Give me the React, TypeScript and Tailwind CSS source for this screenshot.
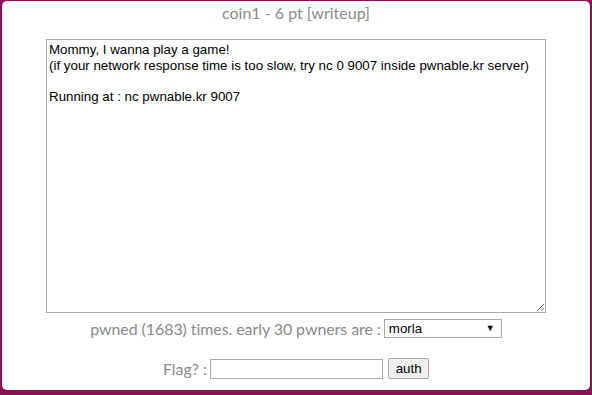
import React from "react";

export default function App() {
  return (
    <div className="w-[592px] h-[395px] bg-[#8b1054] pt-px pl-[2px] pr-[2px] pb-[5px] overflow-hidden">
      <div className="w-full h-full bg-white rounded-[5px] flex flex-col items-center" style={{ fontFamily: "Lato, sans-serif" }}>
        <div className="text-[16px] leading-[20px] text-[#8a8a8a] mt-[2px]">coin1 - 6 pt [writeup]</div>
        <textarea
          readOnly
          className="mt-[16px] w-[500px] h-[274px] border border-[#a9a9a9] px-[2px] pt-[2px] text-[13.33px] leading-[15.6px] text-black outline-none"
          style={{ fontFamily: '"Liberation Sans", Arial, sans-serif', resize: "both" }}
          defaultValue={"Mommy, I wanna play a game!\n(if your network response time is too slow, try nc 0 9007 inside pwnable.kr server)\n\nRunning at : nc pwnable.kr 9007"}
        />
        <div className="mt-[6px] flex items-center h-[19px] text-[16px] text-[#8a8a8a] tracking-[-0.08px]">
          <span>pwned (1683) times. early 30 pwners are :</span>
          <div
            className="ml-[3px] w-[118px] h-[19px] border border-[#a9a9a9] flex items-center justify-between pl-[4px] pr-[6px] text-[13.33px] text-black tracking-normal"
            style={{ fontFamily: '"Liberation Sans", Arial, sans-serif' }}
          >
            <span>morla</span>
            <span className="text-[9px]">▼</span>
          </div>
        </div>
        <div className="mt-[20px] flex items-center h-[21px] text-[16px] text-[#8a8a8a]">
          <span>Flag? :</span>
          <div className="ml-[3px] w-[173px] h-[20px] border border-[#a9a9a9] bg-white" />
          <button
            className="ml-[5px] w-[41px] h-[21px] border border-[#a9a9a9] bg-[#efefef] rounded-[2px] text-[13.33px] text-black flex items-center justify-center"
            style={{ fontFamily: '"Liberation Sans", Arial, sans-serif' }}
          >
            auth
          </button>
        </div>
      </div>
    </div>
  );
}
